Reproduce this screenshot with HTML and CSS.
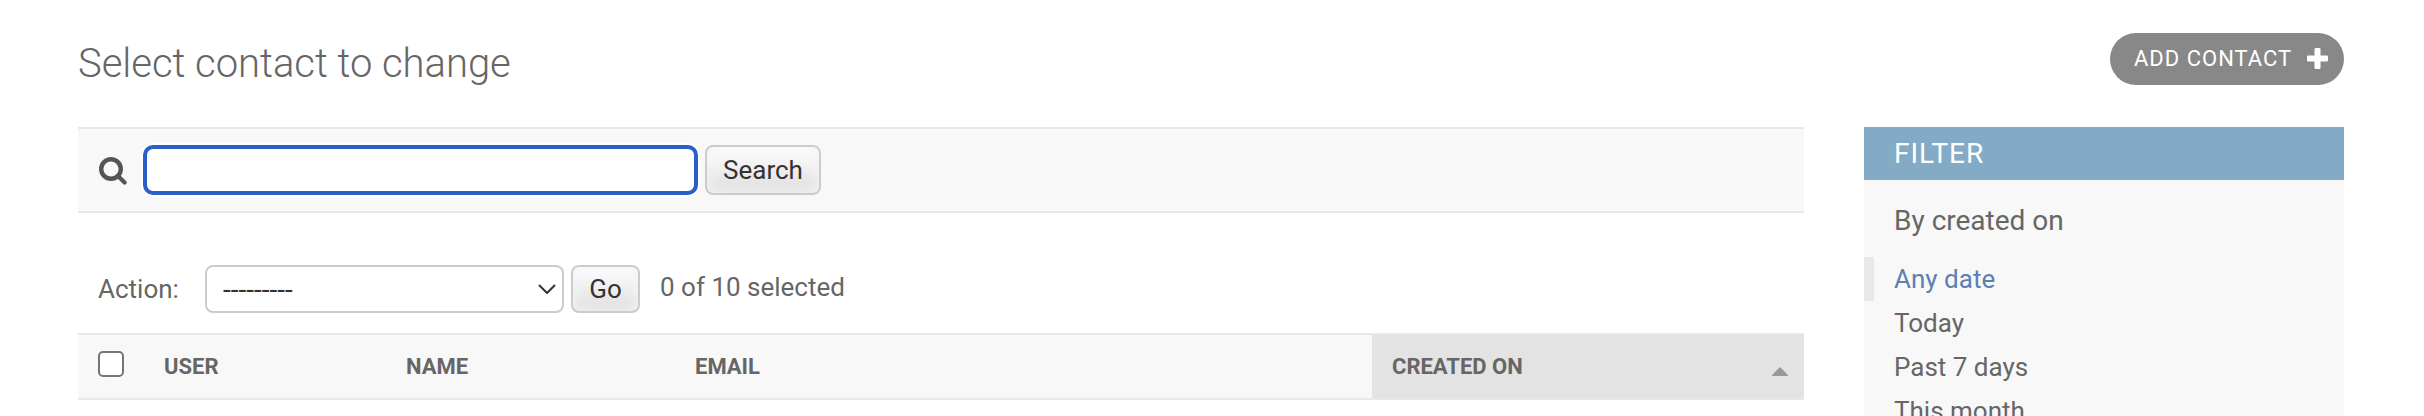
FILE: index.html
```html
<!DOCTYPE html>
<html lang="en">
<head>
<meta charset="utf-8">
<title>Select contact to change</title>
<link rel="stylesheet" href="styles.css">
</head>
<body>
<main class="content">
  <header class="page-header">
    <h1 class="title">Select contact to change</h1>
    <a class="add-link"><span>ADD CONTACT</span><svg class="plus" viewBox="0 0 21 21"><path d="M8.7 0h3.6q1.2 0 1.2 1.2v6.3h6.3q1.2 0 1.2 1.2v3.6q0 1.2-1.2 1.2h-6.3v6.3q0 1.2-1.2 1.2H8.7q-1.2 0-1.2-1.2v-6.3H1.200q-1.200 0-1.200-1.200V8.700q0-1.200 1.200-1.200h6.300V1.200Q7.500 0 8.700 0z" fill="#fff"/></svg></a>
  </header>
  <div class="changelist">
    <section class="results">
      <form class="toolbar">
        <svg class="search-icon" viewBox="0 0 28 28"><circle cx="12" cy="12" r="9.800" fill="none" stroke="#555" stroke-width="4.400"/><path d="M19 19l6.600 6.600" stroke="#555" stroke-width="4.200" stroke-linecap="round"/></svg>
        <input class="search-input" type="text" aria-label="Search">
        <button class="button search-button" type="button">Search</button>
      </form>
      <div class="actions">
        <label class="action-label" for="action">Action:</label>
        <div class="select-wrap">
          <select class="select" id="action"><option>---------</option></select>
          <svg class="chevron" viewBox="0 0 18 11"><path d="M1.500 1.500L9 9l7.500-7.500" fill="none" stroke="#333" stroke-width="2" stroke-linecap="round" stroke-linejoin="round"/></svg>
        </div>
        <button class="button go-button" type="button">Go</button>
        <span class="counter">0 of 10 selected</span>
      </div>
      <div class="table-head">
        <div class="check-cell"><input class="checkbox" type="checkbox" aria-label="Select all"></div>
        <div class="cell">USER</div>
        <div class="cell">NAME</div>
        <div class="cell">EMAIL</div>
        <div class="cell sorted"><span>CREATED ON</span><svg class="sort-arrow" viewBox="0 0 16 9"><path d="M8 0l8 8v1H0V8z" fill="#999"/></svg></div>
      </div>
    </section>
    <aside class="filter">
      <h2 class="filter-title">FILTER</h2>
      <h3 class="filter-by">By created on</h3>
      <ul class="filter-list">
        <li class="filter-item selected">Any date</li>
        <li class="filter-item">Today</li>
        <li class="filter-item">Past 7 days</li>
        <li class="filter-item">This month</li>
      </ul>
    </aside>
  </div>
</main>
</body>
</html>
```
FILE: styles.css
```css
* { box-sizing: border-box; }
html { overflow: hidden; }
body {
  margin: 0;
  height: 416px;
  overflow: hidden;
  background: #fff;
  color: #666;
  font-family: Roboto, "Liberation Sans", sans-serif;
  font-size: 26px;
}
h1, h2, h3, ul { margin: 0; padding: 0; font-weight: 400; }
.content { padding: 33px 80px 0 78px; }
.page-header { display: flex; justify-content: space-between; align-items: flex-start; height: 94px; }
.title { font-size: 40px; font-weight: 300; line-height: 61px; letter-spacing: -0.03px; }
.add-link {
  display: flex;
  align-items: center;
  justify-content: space-between;
  width: 234px;
  height: 52px;
  padding: 0 16.500px 0 24px;
  border-radius: 26px;
  background: #888;
  color: #fff;
  font-size: 22px;
  line-height: 26px;
  letter-spacing: 1px;
}
.plus { width: 21px; height: 21px; margin-bottom: 2px; }
.changelist { display: grid; grid-template-columns: 1726px 480px; gap: 60px; }
.toolbar {
  display: flex;
  align-items: center;
  height: 86px;
  padding: 0 19px 0 21px;
  border-top: 2px solid #e8e8e8;
  border-bottom: 2px solid #e8e8e8;
  background: #f8f8f8;
}
.search-icon { width: 28px; height: 28px; margin: 2px 16px 0 0; }
.search-input {
  width: 555px;
  height: 50px;
  margin: 0 7px 0 0;
  border: 4px solid #285fc9;
  border-radius: 10px;
  outline: 0;
  background: #fff;
  box-shadow: 0 0 0 2px #fff;
}
.button {
  height: 50px;
  padding: 0;
  border: 2px solid #ccc;
  border-radius: 8px;
  background: linear-gradient(#fff, #ddd);
  box-shadow: inset 0 0 12px 2px #f4f4f4;
  color: #333;
  font: 400 26px/44px Roboto, "Liberation Sans", sans-serif;
}
.search-button { width: 116px; }
.actions { display: flex; align-items: center; height: 120px; padding: 32px 20px 0; }
.action-label { width: 107px; }
.select-wrap { position: relative; width: 359px; margin-right: 7px; }
.select {
  display: block;
  appearance: none;
  width: 100%;
  height: 48px;
  padding: 0 16px;
  border: 2px solid #ccc;
  border-radius: 8px;
  background: #fff;
  color: #333;
  font: 400 28px Roboto, "Liberation Sans", sans-serif;
}
.chevron { position: absolute; right: 8px; top: 19px; width: 18px; height: 11px; }
.go-button { width: 69px; height: 48px; margin-right: 20px; }
.counter { margin-bottom: 4px; }
.table-head {
  display: grid;
  grid-template-columns: 66px 242px 289px 697px 432px;
  height: 67px;
  border-top: 2px solid #e8e8e8;
  border-bottom: 2px solid #e8e8e8;
  background: #f8f8f8;
  font-size: 22px;
  font-weight: 700;
}
.check-cell { padding: 16px 0 0 20px; }
.checkbox {
  display: block;
  appearance: none;
  width: 26px;
  height: 26px;
  margin: 0;
  border: 2px solid #767676;
  border-radius: 5px;
  background: #fff;
}
.cell { display: flex; justify-content: space-between; padding: 0 16px 0 20px; line-height: 63px; }
.sorted { background: #e3e3e3; }
.sort-arrow { width: 16px; height: 9px; margin-top: 32px; }
.filter { height: 289px; background: #f8f8f8; }
.filter-title {
  height: 53px;
  padding-left: 30px;
  background: #84abc5;
  color: #fff;
  font-size: 28px;
  line-height: 53px;
  letter-spacing: 1px;
}
.filter-by { padding: 20px 30px 0; height: 77px; font-size: 28px; line-height: 41px; }
.filter-list { list-style: none; }
.filter-item { height: 44px; padding-left: 30px; line-height: 44px; }
.selected { padding-left: 20px; border-left: 10px solid #e8e8e8; color: #5b80b2; }
```
